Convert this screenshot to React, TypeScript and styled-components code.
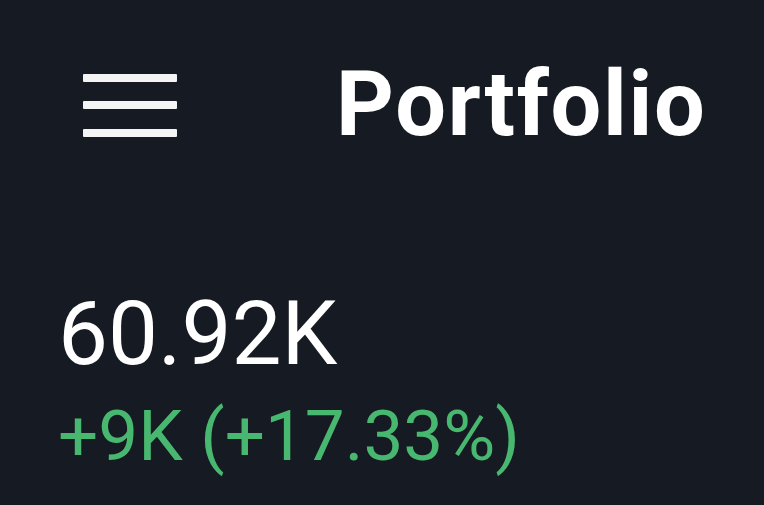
import styled, { createGlobalStyle } from "styled-components";

const Global = createGlobalStyle`
  html, body {
    margin: 0;
    padding: 0;
    background: #161a22;
  }
  body {
    font-family: Roboto, "Noto Sans", sans-serif;
    color: #ffffff;
  }
`;

const Screen = styled.div`
  width: 764px;
  height: 505px;
  background: #161a22;
  overflow: hidden;
  display: flex;
  flex-direction: column;
`;

const Header = styled.header`
  display: flex;
  align-items: center;
  box-sizing: border-box;
  height: 178px;
  padding: 28px 0 0 83px;
`;

const MenuButton = styled.button`
  display: flex;
  flex-direction: column;
  justify-content: space-between;
  width: 94px;
  height: 63px;
  padding: 0;
  margin-top: 4px;
  background: none;
  border: none;
  cursor: pointer;
`;

const MenuLine = styled.span`
  display: block;
  height: 8px;
  border-radius: 1px;
  background: #f4f4f4;
`;

const Title = styled.h1`
  margin: 4px 0 0 159px;
  font-size: 90px;
  font-weight: 700;
  letter-spacing: 1.7px;
  line-height: 1;
  color: #ffffff;
`;

const Summary = styled.section`
  display: flex;
  flex-direction: column;
  padding: 110px 0 0 58px;
`;

const Value = styled.div`
  font-size: 89px;
  font-weight: 400;
  line-height: 92px;
  color: #ffffff;
`;

const Change = styled.div<{ $up: boolean }>`
  margin-top: 10px;
  font-size: 71px;
  font-weight: 400;
  line-height: 92px;
  color: ${({ $up }) => ($up ? "#48b871" : "#e5534b")};
`;

export default function App() {
  return (
    <Screen>
      <Global />
      <Header>
        <MenuButton aria-label="Menu">
          <MenuLine />
          <MenuLine />
          <MenuLine />
        </MenuButton>
        <Title>Portfolio</Title>
      </Header>
      <Summary>
        <Value>60.92K</Value>
        <Change $up>+9K (+17.33%)</Change>
      </Summary>
    </Screen>
  );
}
